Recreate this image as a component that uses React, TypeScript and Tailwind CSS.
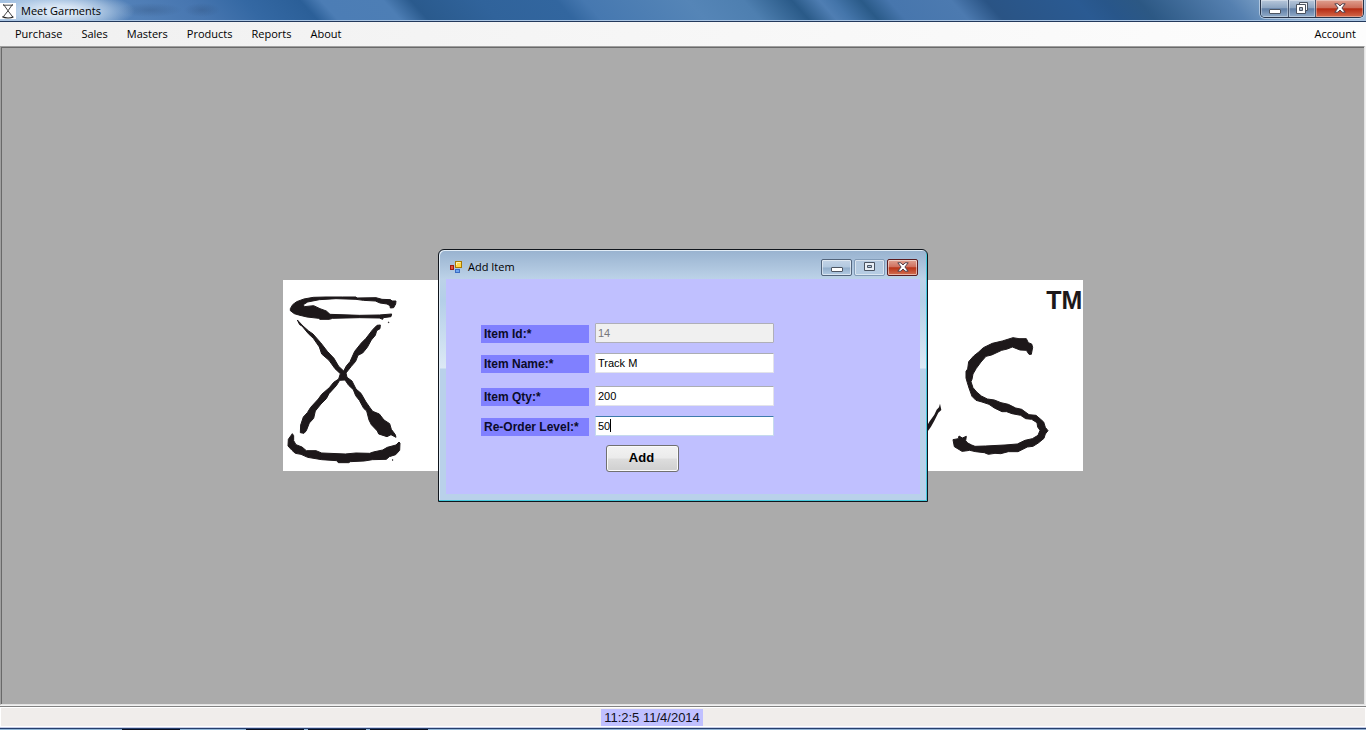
import React from "react";

const menus = ["Purchase", "Sales", "Masters", "Products", "Reports", "About"];

const uiFont = "font-['Open_Sans','Noto_Sans',sans-serif]";
const formFont = "font-['Liberation_Sans',Arial,sans-serif]";

function HourglassIcon() {
  return (
    <svg viewBox="0 0 16 16" className="size-4 bg-white" aria-hidden="true">
      <path d="M3 2.2h10M3.4 1.2 8 7.8 12.8 14M12.6 1.2 8 7.8 3.6 13.4" fill="none" stroke="#444" strokeWidth="1" />
      <path d="M2.4 13.6c3 1.6 8 1.6 11 .2" fill="none" stroke="#222" strokeWidth="1.3" />
    </svg>
  );
}

function FormIcon() {
  return (
    <svg viewBox="0 0 14 14" className="size-[14px]" aria-hidden="true">
      <rect x="6.5" y="1.5" width="6" height="6" fill="#ffd84a" stroke="#a87800" />
      <path d="M7.5 5V2.5h4" fill="none" stroke="#fff3b0" />
      <rect x="1.5" y="5.5" width="3" height="4" fill="#e0503c" stroke="#9c1c10" />
      <rect x="6.5" y="9.5" width="4" height="3" fill="#6fa5ee" stroke="#3a6cc4" />
    </svg>
  );
}

function MinimizeGlyph() {
  return (
    <svg viewBox="0 0 14 12" className="h-3 w-[14px]" aria-hidden="true">
      <rect x="1.5" y="6.5" width="11" height="4" rx="0.5" fill="#fff" stroke="#4d5562" />
    </svg>
  );
}

function MaximizeGlyph() {
  return (
    <svg viewBox="0 0 12 10" className="h-[10px] w-3" aria-hidden="true">
      <path d="M.5.5h10v8h-10zM3.500 3.5v2h4v-2z" fill="#e8eef5" fillRule="evenodd" stroke="#4a5360" />
    </svg>
  );
}

function RestoreGlyph() {
  return (
    <svg viewBox="0 0 12 12" className="size-3" aria-hidden="true">
      <path d="M3.5.5h8v8h-8z" fill="#f4f6fa" stroke="#4a5360" />
      <path d="M.5 2.5h9v9h-9z" fill="#fff" stroke="#4a5360" />
      <path d="M3.5 5.5h3v3h-3z" fill="#a8b8cc" stroke="#4a5360" />
    </svg>
  );
}

function CloseGlyph() {
  return (
    <svg viewBox="0 0 12 10" className="h-[10px] w-3" aria-hidden="true">
      <path
        d="M.8.8h3.1L6 3 8.100.8h3.100L7.900 5l3.300 4.200H8.100L6 7 3.900 9.200H.8L4.100 5z"
        fill="#fff"
        stroke="#51404a"
        strokeWidth="1"
      />
    </svg>
  );
}

function Logo() {
  return (
    <svg viewBox="0 0 800 191" className="w-[800px] max-w-full bg-white" role="img" aria-label="Garments logo">
      <g fill="#1d181a" stroke="#1d181a" strokeWidth="3" strokeLinejoin="round" transform="translate(-7 -6) scale(.33333)">
        <path
          fillRule="evenodd"
          d="M43 104 50 92 62 83 84 75 112 70 150 69 200 69 240 69 243 72 300 71 318 76 344 77 348 81 360 81 359 90 353 101 343 102 342 95 333 90 312 87 298 81 262 79 240 76 180 74 130 77 95 84 82 92 85 98 113 95 132 104 151 111 162 121 250 124 310 123 347 120 345 128 322 131 320 136 310 132 250 131 170 133 160 136 131 136 128 133 93 129 68 123 55 119 43 110z"
        />
        <path d="M64 138 81 156 98 171 111 180 134 206 154 232 174 253 188 277 203 291 211 276 222 263 236 232 256 207 270 193 290 167 303 154 313 153 312 164 302 170 298 184 286 198 274 220 260 237 246 244 239 262 226 277 210 297 213 310 228 321 240 345 255 358 270 384 282 401 290 412 310 420 324 438 341 449 346 466 358 482 360 490 345 482 333 488 308 480 304 471 286 452 279 438 272 411 263 403 250 379 239 365 232 347 218 334 207 318 191 319 181 335 159 359 151 374 135 390 118 411 113 433 100 447 91 470 84 478 73 476 74 453 82 429 94 416 104 400 127 375 137 361 160 341 173 325 188 315 193 299 177 284 159 259 137 240 130 219 112 193 97 179 78 156 71 152z" />
        <path d="M49 479 53 485 53 500 60 512 78 519 91 530 120 530 137 537 208 540 240 537 281 538 292 534 320 528 334 520 360 513 369 504 372 507 371 529 359 542 340 548 331 556 289 557 265 561 223 563 218 566 187 566 182 560 137 557 95 550 75 541 58 538 48 529 36 516 37 496z" />
        <circle cx="338" cy="145" r="1" />
        <circle cx="350" cy="558" r="1" />
      </g>
      <g fill="#1d181a" transform="translate(632 -6) scale(.33333)">
        <path d="M75 389 79 408 70 416 58 440 48 458 34 478 25 475 43 443 58 422 65 407 72 400z" />
        <path
          stroke="#1d181a"
          strokeWidth="3"
          strokeLinejoin="round"
          d="M350 210 353 220 349 241 342 241 334 229 315 228 292 219 277 225 260 229 230 243 213 247 198 264 184 283 174 300 171 316 168 323 174 341 185 354 199 366 217 375 238 378 258 386 280 391 302 402 320 406 342 422 363 424 376 435 386 444 391 460 399 470 391 480 387 493 370 507 354 517 337 519 309 533 280 533 257 539 240 538 220 541 208 536 182 533 164 529 151 531 141 532 118 518 114 497 130 494 132 486 142 492 154 487 152 500 158 507 170 513 180 517 212 516 270 513 307 510 330 499 352 494 369 484 375 469 368 459 366 446 350 436 332 434 317 424 291 419 275 413 261 413 238 402 222 391 201 384 183 379 171 367 162 342 157 326 153 312 153 292 158 285 161 263 176 246 190 235 205 221 232 208 262 201 294 191 312 194 334 194 340 206z"
        />
        <text x="394" y="105" fontFamily="'Liberation Sans', Arial, sans-serif" fontWeight="bold" fontSize="75">
          TM
        </text>
      </g>
    </svg>
  );
}

interface FieldProps {
  id: string;
  label: string;
  value: string;
  disabled?: boolean;
  active?: boolean;
}

function Field({ id, label, value, disabled, active }: FieldProps) {
  return (
    <div className="flex items-end gap-1.5">
      <label htmlFor={id} className="h-[18px] w-[108px] bg-[#8080ff] pl-[3px] text-xs leading-[18px] font-bold whitespace-nowrap text-[#0b0b28]">
        {label}
      </label>
      <div className="relative">
        <input
          id={id}
          type="text"
          defaultValue={value}
          disabled={disabled}
          className={
            "block h-5 w-[179px] rounded-[1px] border px-0.5 text-[11px] outline-none " +
            (disabled
              ? "border-[#afafb8] bg-[#f0f0f0] text-[#77777b]"
              : active
                ? "border-[#c5daed] border-t-[#3d7bad] bg-white text-black"
                : "border-[#e2e3ea] border-t-[#abadb3] bg-white text-black")
          }
        />
        {active && <span className="absolute top-[3px] left-[15px] h-[13px] w-px bg-black" />}
      </div>
    </div>
  );
}

const captionButton =
  "flex h-[17px] w-[31px] items-center justify-center rounded-[2px] border shadow-[inset_0_0_0_1px_rgba(255,255,255,0.5)]";

function AddItemDialog() {
  return (
    <section
      role="dialog"
      aria-label="Add Item"
      className="relative col-start-1 row-start-1 w-[490px] rounded-t-md border border-[#10151c] bg-[linear-gradient(180deg,#98b2cf_0px,#bcd2e8_29px,#b4cfe8_50px,#dce9f5_118px,#b9d1ea_119px,#b9d1ea_100%)] px-[7px] pb-[7px] shadow-[inset_-1px_-1px_0_#45c8dc,inset_1px_1px_0_#e2edf7]"
    >
      <header className="flex h-[29px] items-center justify-between pt-1.5 pr-0.5 pl-[3px]">
        <div className="flex items-center gap-[5px]">
          <FormIcon />
          <h2 className={`${uiFont} text-[11px] leading-4 text-black`}>Add Item</h2>
        </div>
        <div className="flex gap-0.5">
          <button aria-label="Minimize" className={`${captionButton} border-[#53657c] bg-[linear-gradient(#c3d4e7_0%,#b2c8df_48%,#91adca_52%,#b4cce4_100%)]`}>
            <MinimizeGlyph />
          </button>
          <button aria-label="Maximize" className={`${captionButton} border-[#829bb7] bg-[linear-gradient(#b5c9df,#b5cce3)]`}>
            <MaximizeGlyph />
          </button>
          <button aria-label="Close" className={`${captionButton} border-[#5a1c20] bg-[linear-gradient(#e0a393_0%,#d0715f_45%,#b93418_52%,#d27152_100%)]`}>
            <CloseGlyph />
          </button>
        </div>
      </header>
      <form className={`${formFont} h-[215px] bg-[#c0c0ff] pt-11 pl-[35px]`} onSubmit={(e) => e.preventDefault()}>
        <div className="flex flex-col gap-[13px]">
          <div className="flex flex-col gap-2.5">
            <Field id="item-id" label="Item Id:*" value="14" disabled />
            <Field id="item-name" label="Item Name:*" value="Track M" />
          </div>
          <div className="flex flex-col gap-2.5">
            <Field id="item-qty" label="Item Qty:*" value="200" />
            <Field id="reorder-level" label="Re-Order Level:*" value="50" active />
          </div>
        </div>
        <button
          type="submit"
          className="mt-[9px] ml-[125px] block h-[27px] w-[73px] rounded-[3px] border border-[#707070] bg-[linear-gradient(#f2f2f2_0%,#ebebeb_48%,#dddddd_52%,#cfcfcf_100%)] pr-0.5 text-[13px] font-bold text-black shadow-[inset_0_0_0_1px_#fafafa]"
        >
          Add
        </button>
      </form>
    </section>
  );
}

export default function App() {
  return (
    <div className="flex h-screen min-h-[560px] flex-col overflow-hidden bg-[#f0f0f0]">
      <header
        className="flex h-[22px] shrink-0 items-start justify-between border-b border-[#23395c] shadow-[inset_0_-1px_0_#a9c4e2] bg-[radial-gradient(ellipse_75px_20px_at_60px_11px,rgba(225,236,248,0.9)_25%,rgba(190,212,235,0.6)_65%,transparent_100%),radial-gradient(ellipse_32px_7px_at_150px_10px,rgba(45,75,115,0.3),transparent),radial-gradient(ellipse_18px_7px_at_202px_10px,rgba(45,75,115,0.3),transparent),linear-gradient(48deg,#a9c6e4_0%,#8fb2d8_4%,#5583ba_9%,#4776b0_15%,#3468a3_19%,#2b5f98_23%,#4c7db5_24.5%,#4d7eb5_29%,#2a5a8d_31%,#30639b_36%,#32669f_41.5%,#4678b0_43.5%,#5585b7_51%,#4e7fb0_55%,#2a5a88_58.5%,#4f7eb3_60.5%,#4475aa_61.500%,#2a5a88_63.5%,#4776ad_65.500%,#4c7ab0_70%,#2a5485_72.5%,#2a5a92_79%,#28568a_81%,#2c5884_83.500%,#5580b0_90%,#8badd0_94%,#a9c2dd_100%)]"
      >
        <div className="flex items-center gap-[5px] pt-[3px]">
          <HourglassIcon />
          <h1 className={`${uiFont} text-[11px] leading-4 text-black`}>Meet Garments</h1>
        </div>
        <div className="mr-0.5 flex h-[18px] overflow-hidden rounded-b-[5px] border border-t-0 border-[#27344a] shadow-[0_0_0_1px_rgba(220,232,245,0.6)]">
          <button aria-label="Minimize window" className="flex w-7 items-center justify-center border-r border-[#47566e] bg-[linear-gradient(#b8c8db_0%,#8da5c2_45%,#607ea5_52%,#91abc9_100%)] shadow-[inset_0_0_0_1px_rgba(255,255,255,0.35)]">
            <MinimizeGlyph />
          </button>
          <button aria-label="Restore window" className="flex w-[27px] items-center justify-center border-r border-[#47566e] bg-[linear-gradient(#b8c8db_0%,#8da5c2_45%,#607ea5_52%,#91abc9_100%)] pb-0.5 shadow-[inset_0_0_0_1px_rgba(255,255,255,0.35)]">
            <RestoreGlyph />
          </button>
          <button aria-label="Close window" className="flex w-[47px] items-center justify-center bg-[linear-gradient(#dfa090_0%,#cd6e5b_45%,#b52b13_52%,#d4694a_100%)] pb-0.5 shadow-[inset_0_0_0_1px_rgba(255,255,255,0.35)]">
            <CloseGlyph />
          </button>
        </div>
      </header>

      <nav className={`${uiFont} flex h-6 shrink-0 items-center justify-between bg-[linear-gradient(90deg,#f0f0f0,#fdfdfd)] pr-[10px] pl-[15px] text-[11px] text-black`}>
        <ul className="flex gap-[19px]">
          {menus.map((item) => (
            <li key={item}>
              <button>{item}</button>
            </li>
          ))}
        </ul>
        <button>Account</button>
      </nav>

      <main className="mr-px grid min-h-0 flex-1 place-items-center border-t border-r border-b border-l border-t-[#a0a0a0] border-r-[#e3e3e3] border-b-[#e3e3e3] border-l-[#a0a0a0]">
        <div className="grid size-full place-items-center border-t border-l border-[#696969] bg-[#ababab] pb-0.5">
          <div className="grid place-items-center">
            <div className="col-start-1 row-start-1">
              <Logo />
            </div>
            <AddItemDialog />
          </div>
        </div>
      </main>

      <footer className={`${formFont} mt-px flex h-[21px] shrink-0 justify-center border-t border-t-[#828282] bg-[#f0edeb] pr-[62px] shadow-[inset_1px_1px_0_#fff,inset_-1px_-1px_0_#fff]`}>
        <time className="mt-0.5 h-[17px] bg-[#c0c0ff] px-[3px] text-[13px] leading-[17px] text-[#101020]">11:2:5 11/4/2014</time>
      </footer>
      <div className="flex h-[3px] shrink-0 flex-col">
        <div className="h-px bg-[#c4cbe6]" />
        <div className="h-px bg-[#263f6c]" />
        <div className="h-px bg-[linear-gradient(90deg,#8fb4d6_122px,#0b1020_122px,#0b1020_180px,#8fb4d6_180px,#8fb4d6_246px,#0b1020_246px,#0b1020_304px,#8fb4d6_304px,#8fb4d6_308px,#0b1020_308px,#0b1020_366px,#8fb4d6_366px,#8fb4d6_370px,#0b1020_370px,#0b1020_428px,#8fb4d6_428px,#90acd0_100%)]" />
      </div>
    </div>
  );
}
